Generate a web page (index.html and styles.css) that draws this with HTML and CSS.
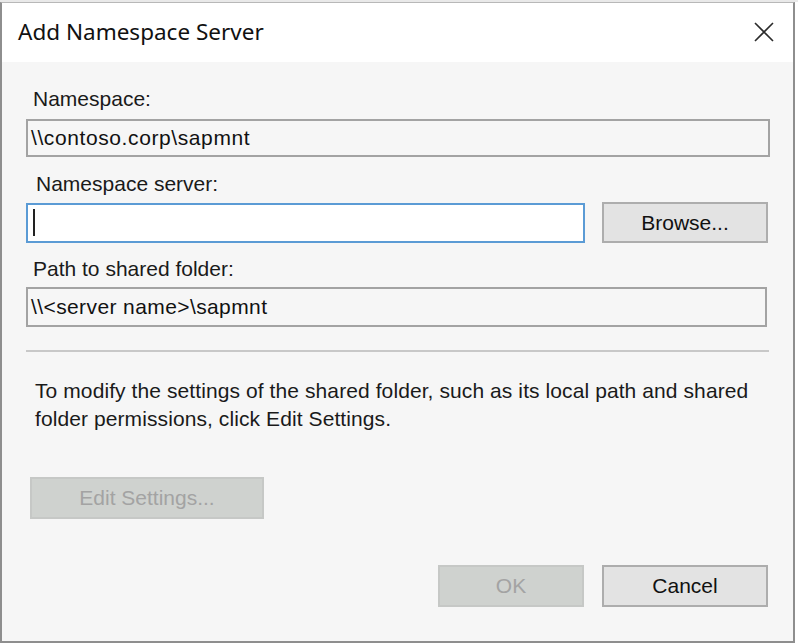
FILE: index.html
```html
<!DOCTYPE html>
<html>
<head>
<meta charset="utf-8">
<link rel="stylesheet" href="styles.css">
</head>
<body>
<div class="topstrip"></div>
<div class="window">
  <div class="titlebar">
    <span class="title">Add Namespace Server</span>
    <svg class="close" width="20" height="20" viewBox="0 0 20 20"><path d="M1 1 L19 19 M19 1 L1 19" stroke="#2b2b2b" stroke-width="1.6" fill="none"/></svg>
  </div>
  <div class="content">
    <div class="label l1">Namespace:</div>
    <div class="field ro f1">\\contoso.corp\sapmnt</div>
    <div class="label l2">Namespace server:</div>
    <div class="row r1">
      <div class="field active"><span class="caret"></span></div>
      <div class="btn browse">Browse...</div>
    </div>
    <div class="label l3">Path to shared folder:</div>
    <div class="field ro f3">\\&lt;server name&gt;\sapmnt</div>
    <div class="sep"></div>
    <p class="desc">To modify the settings of the shared folder, such as its local path and shared folder permissions, click Edit Settings.</p>
    <div class="btn disabled edit">Edit Settings...</div>
    <div class="row footer">
      <div class="btn disabled ok">OK</div>
      <div class="btn cancel">Cancel</div>
    </div>
  </div>
</div>
</body>
</html>
```
FILE: styles.css
```css
html, body { margin: 0; padding: 0; }
body {
  background: #ffffff;
  width: 798px;
  height: 644px;
  overflow: hidden;
  font-family: "Liberation Sans", Arial, sans-serif;
  color: #1a1a1a;
}
.topstrip { height: 2px; background: #e9e9e9; }
.window {
  width: 791px;
  height: 638px;
  border-left: 2px solid #8e8e8e;
  border-right: 2px solid #8e8e8e;
  border-bottom: 2px solid #8e8e8e;
  border-top: 1px solid #b8b8b8;
  background: #f6f6f6;
  display: flex;
  flex-direction: column;
}
.titlebar {
  height: 59px;
  background: #ffffff;
  display: flex;
  align-items: center;
  justify-content: space-between;
  padding: 0 19px 0 16px;
  flex: none;
}
.title {
  font-family: "Noto Sans", "Open Sans", sans-serif;
  font-size: 22.5px;
  color: #111;
  margin-top: -2px;
}
.close { display: block; margin-top: -1px; }
.content {
  padding: 25px 23px 0 24px;
  display: flex;
  flex-direction: column;
  align-items: flex-start;
  font-size: 21px;
}
.label { line-height: 24px; height: 24px; color: #1a1a1a; }
.l1 { padding-left: 7px; }
.l2 { padding-left: 10px; margin-top: 15px; }
.l3 { padding-left: 7px; margin-top: 14px; }
.field {
  box-sizing: border-box;
  display: flex;
  align-items: center;
  padding-left: 3px;
  color: #111;
}
.ro {
  border: 2px solid #a3a3a3;
  background: #f6f6f6;
}
.f1 { width: 744px; height: 38px; margin-top: 8px; letter-spacing: 0.6px; }
.f3 { width: 741px; height: 40px; margin-top: 6px; letter-spacing: 0.4px; }
.row { display: flex; align-items: center; }
.r1 { margin-top: 6px; gap: 17px; }
.active {
  width: 559px;
  height: 40px;
  border: 2px solid #5b9bd5;
  background: #ffffff;
  padding-left: 5px;
}
.caret { display: block; width: 2px; height: 27px; background: #222; }
.btn {
  box-sizing: border-box;
  display: flex;
  align-items: center;
  justify-content: center;
  border: 2px solid #adadad;
  background: #e3e3e3;
  color: #111;
  font-size: 21px;
}
.browse { width: 166px; height: 41px; }
.sep {
  width: 743px;
  height: 2px;
  background: #c8c8c8;
  margin-top: 23px;
}
.desc {
  margin: 25px 0 0 9px;
  line-height: 28px;
  width: 740px;
  letter-spacing: 0.09px;
  color: #1a1a1a;
}
.disabled {
  background: #cfd2cf;
  border-color: #c6c8c6;
  color: #a3a3a3;
}
.edit { width: 234px; height: 42px; margin: 44px 0 0 4px; }
.footer { margin-top: 46px; align-self: stretch; justify-content: flex-end; gap: 18px; padding-right: 2px; }
.ok { width: 146px; height: 42px; }
.cancel { width: 166px; height: 42px; }
```
